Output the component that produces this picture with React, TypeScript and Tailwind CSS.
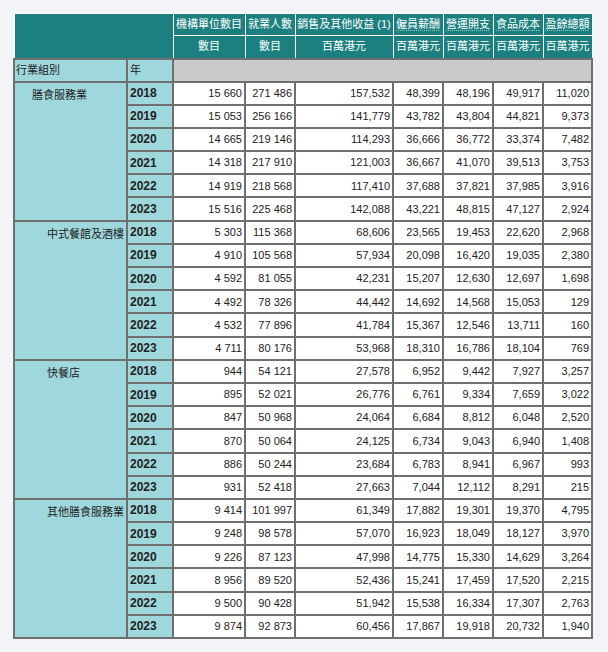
const groups: { name: string; rows: [string, string, string, string, string, string, string, string][] }[] = [
  {
    name: "膳食服務業",
    rows: [
      ["2018", "15 660", "271 486", "157,532", "48,399", "48,196", "49,917", "11,020"],
      ["2019", "15 053", "256 166", "141,779", "43,782", "43,804", "44,821", "9,373"],
      ["2020", "14 665", "219 146", "114,293", "36,666", "36,772", "33,374", "7,482"],
      ["2021", "14 318", "217 910", "121,003", "36,667", "41,070", "39,513", "3,753"],
      ["2022", "14 919", "218 568", "117,410", "37,688", "37,821", "37,985", "3,916"],
      ["2023", "15 516", "225 468", "142,088", "43,221", "48,815", "47,127", "2,924"],
    ],
  },
  {
    name: "中式餐館及酒樓",
    rows: [
      ["2018", "5 303", "115 368", "68,606", "23,565", "19,453", "22,620", "2,968"],
      ["2019", "4 910", "105 568", "57,934", "20,098", "16,420", "19,035", "2,380"],
      ["2020", "4 592", "81 055", "42,231", "15,207", "12,630", "12,697", "1,698"],
      ["2021", "4 492", "78 326", "44,442", "14,692", "14,568", "15,053", "129"],
      ["2022", "4 532", "77 896", "41,784", "15,367", "12,546", "13,711", "160"],
      ["2023", "4 711", "80 176", "53,968", "18,310", "16,786", "18,104", "769"],
    ],
  },
  {
    name: "快餐店",
    rows: [
      ["2018", "944", "54 121", "27,578", "6,952", "9,442", "7,927", "3,257"],
      ["2019", "895", "52 021", "26,776", "6,761", "9,334", "7,659", "3,022"],
      ["2020", "847", "50 968", "24,064", "6,684", "8,812", "6,048", "2,520"],
      ["2021", "870", "50 064", "24,125", "6,734", "9,043", "6,940", "1,408"],
      ["2022", "886", "50 244", "23,684", "6,783", "8,941", "6,967", "993"],
      ["2023", "931", "52 418", "27,663", "7,044", "12,112", "8,291", "215"],
    ],
  },
  {
    name: "其他膳食服務業",
    rows: [
      ["2018", "9 414", "101 997", "61,349", "17,882", "19,301", "19,370", "4,795"],
      ["2019", "9 248", "98 578", "57,070", "16,923", "18,049", "18,127", "3,970"],
      ["2020", "9 226", "87 123", "47,998", "14,775", "15,330", "14,629", "3,264"],
      ["2021", "8 956", "89 520", "52,436", "15,241", "17,459", "17,520", "2,215"],
      ["2022", "9 500", "90 428", "51,942", "15,538", "16,334", "17,307", "2,763"],
      ["2023", "9 874", "92 873", "60,456", "17,867", "19,918", "20,732", "1,940"],
    ],
  },
];

const headers = [
  { label: "機構單位數目", unit: "數目", w: "w-[72px]" },
  { label: "就業人數", unit: "數目", w: "w-[50px]" },
  { label: "銷售及其他收益 (1)", unit: "百萬港元", w: "w-[98px]" },
  { label: "僱員薪酬", unit: "百萬港元", w: "w-[50px]", abbr: true },
  { label: "營運開支", unit: "百萬港元", w: "w-[50px]", abbr: true },
  { label: "食品成本", unit: "百萬港元", w: "w-[50px]", abbr: true },
  { label: "盈餘總額", unit: "百萬港元", w: "w-[49px]", abbr: true },
];

const head = "border border-white bg-[#1d8080] text-white font-normal text-center px-[1px] whitespace-nowrap";
const grid = "border-2 border-[#6f6f6f]";

export default function App() {
  return (
    <div className="min-h-screen bg-[#f3f4f8] pl-[13px] pt-[13px] font-['Liberation_Sans','Noto_Sans_CJK_TC',sans-serif] text-[11px] text-[#222]">
      <table className="border-collapse table-fixed w-[578px]">
        <colgroup>
          <col className="w-[113px]" />
          <col className="w-[46px]" />
          {headers.map((h) => (
            <col key={h.label} className={h.w} />
          ))}
        </colgroup>
        <thead>
          <tr className="h-[21.5px]">
            <th colSpan={2} rowSpan={2} className={head}></th>
            {headers.map((h) => (
              <th key={h.label} className={head}>
                <span className={h.abbr ? "underline decoration-dotted decoration-white/50 underline-offset-2" : ""}>{h.label}</span>
              </th>
            ))}
          </tr>
          <tr className="h-[23.5px]">
            {headers.map((h) => (
              <th key={h.label} className={head}>
                {h.unit}
              </th>
            ))}
          </tr>
          <tr className="h-[23px]">
            <th className={`${grid} bg-[#9fd8dc] text-left font-normal pl-[1px]`}>行業組別</th>
            <th className={`${grid} bg-[#9fd8dc] text-left font-normal pl-[2px]`}>年</th>
            <th colSpan={7} className={`${grid} bg-[#c9c9c9]`}></th>
          </tr>
        </thead>
        <tbody>
          {groups.map((g, gi) =>
            g.rows.map((r, ri) => (
              <tr key={g.name + r[0]} className="h-[23.2px]">
                {ri === 0 && (
                  <td
                    rowSpan={6}
                    className={`${grid} bg-[#9fd8dc] align-top pt-[4px] whitespace-nowrap ${gi === 0 ? "pl-[17px]" : "pl-[32px]"}`}
                  >
                    {g.name}
                  </td>
                )}
                <td className={`${grid} bg-[#9fd8dc] font-bold text-[12px] pl-[2px]`}>{r[0]}</td>
                {r.slice(1).map((v, i) => (
                  <td key={i} className={`${grid} bg-white text-right pr-[2px] whitespace-nowrap`}>
                    {v}
                  </td>
                ))}
              </tr>
            ))
          )}
        </tbody>
      </table>
    </div>
  );
}
